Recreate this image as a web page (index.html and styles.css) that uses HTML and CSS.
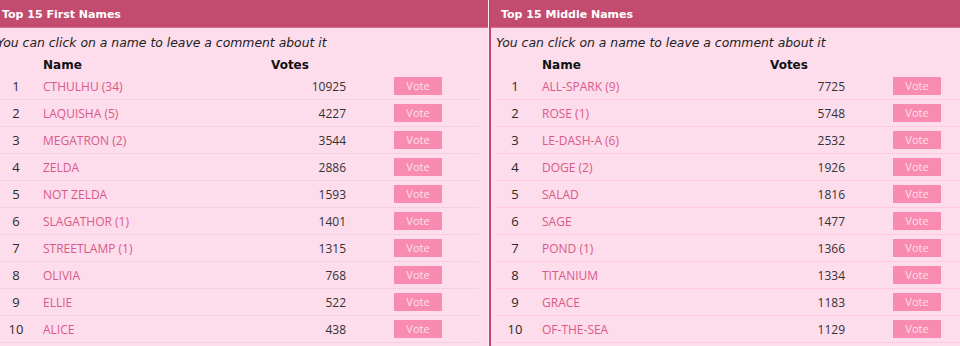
FILE: index.html
```html
<!DOCTYPE html>
<html lang="en">
<head>
<meta charset="utf-8">
<title>Top 15 Names</title>
<link rel="stylesheet" href="styles.css">
</head>
<body>
<div class="page">
  <section class="panel">
    <h2 class="panel-title">Top 15 First Names</h2>
    <p class="hint">You can click on a name to leave a comment about it</p>
    <div class="list">
      <div class="row head"><span class="rank"></span><span class="name">Name</span><span class="votes">Votes</span><span></span></div>
      <div class="row"><span class="rank">1</span><a class="name" href="#">CTHULHU (34)</a><span class="votes">10925</span><span class="act"><button class="vote">Vote</button></span></div>
      <div class="row"><span class="rank">2</span><a class="name" href="#">LAQUISHA (5)</a><span class="votes">4227</span><span class="act"><button class="vote">Vote</button></span></div>
      <div class="row"><span class="rank">3</span><a class="name" href="#">MEGATRON (2)</a><span class="votes">3544</span><span class="act"><button class="vote">Vote</button></span></div>
      <div class="row"><span class="rank">4</span><a class="name" href="#">ZELDA</a><span class="votes">2886</span><span class="act"><button class="vote">Vote</button></span></div>
      <div class="row"><span class="rank">5</span><a class="name" href="#">NOT ZELDA</a><span class="votes">1593</span><span class="act"><button class="vote">Vote</button></span></div>
      <div class="row"><span class="rank">6</span><a class="name" href="#">SLAGATHOR (1)</a><span class="votes">1401</span><span class="act"><button class="vote">Vote</button></span></div>
      <div class="row"><span class="rank">7</span><a class="name" href="#">STREETLAMP (1)</a><span class="votes">1315</span><span class="act"><button class="vote">Vote</button></span></div>
      <div class="row"><span class="rank">8</span><a class="name" href="#">OLIVIA</a><span class="votes">768</span><span class="act"><button class="vote">Vote</button></span></div>
      <div class="row"><span class="rank">9</span><a class="name" href="#">ELLIE</a><span class="votes">522</span><span class="act"><button class="vote">Vote</button></span></div>
      <div class="row"><span class="rank">10</span><a class="name" href="#">ALICE</a><span class="votes">438</span><span class="act"><button class="vote">Vote</button></span></div>
    </div>
  </section>
  <section class="panel">
    <h2 class="panel-title">Top 15 Middle Names</h2>
    <p class="hint">You can click on a name to leave a comment about it</p>
    <div class="list">
      <div class="row head"><span class="rank"></span><span class="name">Name</span><span class="votes">Votes</span><span></span></div>
      <div class="row"><span class="rank">1</span><a class="name" href="#">ALL-SPARK (9)</a><span class="votes">7725</span><span class="act"><button class="vote">Vote</button></span></div>
      <div class="row"><span class="rank">2</span><a class="name" href="#">ROSE (1)</a><span class="votes">5748</span><span class="act"><button class="vote">Vote</button></span></div>
      <div class="row"><span class="rank">3</span><a class="name" href="#">LE-DASH-A (6)</a><span class="votes">2532</span><span class="act"><button class="vote">Vote</button></span></div>
      <div class="row"><span class="rank">4</span><a class="name" href="#">DOGE (2)</a><span class="votes">1926</span><span class="act"><button class="vote">Vote</button></span></div>
      <div class="row"><span class="rank">5</span><a class="name" href="#">SALAD</a><span class="votes">1816</span><span class="act"><button class="vote">Vote</button></span></div>
      <div class="row"><span class="rank">6</span><a class="name" href="#">SAGE</a><span class="votes">1477</span><span class="act"><button class="vote">Vote</button></span></div>
      <div class="row"><span class="rank">7</span><a class="name" href="#">POND (1)</a><span class="votes">1366</span><span class="act"><button class="vote">Vote</button></span></div>
      <div class="row"><span class="rank">8</span><a class="name" href="#">TITANIUM</a><span class="votes">1334</span><span class="act"><button class="vote">Vote</button></span></div>
      <div class="row"><span class="rank">9</span><a class="name" href="#">GRACE</a><span class="votes">1183</span><span class="act"><button class="vote">Vote</button></span></div>
      <div class="row"><span class="rank">10</span><a class="name" href="#">OF-THE-SEA</a><span class="votes">1129</span><span class="act"><button class="vote">Vote</button></span></div>
    </div>
  </section>
</div>
</body>
</html>
```
FILE: styles.css
```css
html, body {
  margin: 0;
  padding: 0;
  height: 346px;
  overflow: hidden;
  background: #fde6f0;
}
.page {
  display: flex;
  gap: 1px;
  margin-left: -10px;
  height: 100%;
}
.panel {
  flex: none;
  width: 496px;
  border-left: 2px solid #c0486e;
  background: #fddcec;
}
.panel-title {
  margin: 0;
  height: 24px;
  padding: 3px 10px 0;
  background: #c34b70;
  border-bottom: 1px solid #da7196;
  color: #ffffff;
  font: bold 11px/24px "DejaVu Sans", Verdana, sans-serif;
}
.hint {
  margin: 6px 0 0;
  padding-left: 5px;
  color: #222222;
  font: italic 12.4px/17px "DejaVu Sans", Verdana, sans-serif;
}
.list {
  margin: 7px 10px 0 5px;
}
.row {
  display: grid;
  grid-template-columns: 38px 236px 75px 1fr;
  align-items: center;
  height: 26px;
  border-bottom: 1px dotted #f4bcd1;
  font: 12px "Open Sans", sans-serif;
  color: #333333;
}
.row.head {
  height: 15px;
  border-bottom: none;
  font: bold 12px/15px "DejaVu Sans", Verdana, sans-serif;
  color: #111111;
}
.rank {
  text-align: center;
  font-size: 13px;
  color: #2a2a2a;
}
.name {
  padding-left: 8px;
  color: #d95a88;
  text-decoration: none;
}
.row.head .name {
  color: #111111;
}
.votes {
  text-align: right;
}
.row.head .votes {
  text-align: left;
}
.act {
  padding-left: 48px;
  display: flex;
}
.vote {
  width: 48px;
  height: 18px;
  padding: 0;
  border: none;
  background: #f98bb0;
  color: #fde0ea;
  font: 11px/18px "Open Sans", sans-serif;
}
```
